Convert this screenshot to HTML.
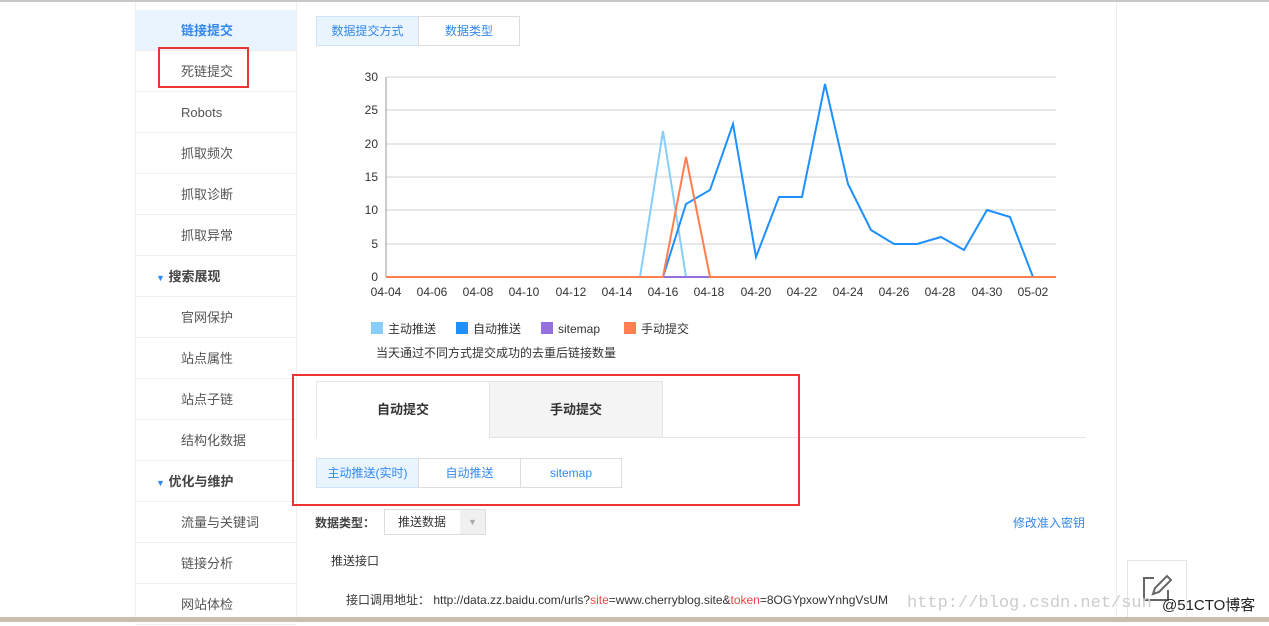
<!DOCTYPE html>
<html><head><meta charset="utf-8"><style>
*{margin:0;padding:0;box-sizing:border-box}
body{width:1269px;height:622px;overflow:hidden;background:#fff;position:relative;font-family:"Liberation Sans","Noto Sans CJK SC",sans-serif;font-size:13px;color:#333}
.a{position:absolute}
.side div{position:absolute;left:136px;width:160px;height:41px;line-height:42px;border-bottom:1px solid #eee;padding-left:45px;color:#555;font-size:13px}
.btn{position:absolute;height:30px;line-height:28px;border:1px solid #ddd;text-align:center;font-size:12px;color:#3388ee;background:#fff}
</style></head><body>
<div class="a" style="left:0;top:0;width:1269px;height:2px;background:#c8c8c8"></div>
<div class="a" style="left:135px;top:2px;width:1px;height:620px;background:#eee"></div>
<div class="a" style="left:296px;top:2px;width:1px;height:620px;background:#eee"></div>
<div class="a" style="left:1116px;top:2px;width:1px;height:620px;background:#eee"></div>
<div class="side">
<div style="top:10px;background:#eaf4fe;color:#3388ee;font-weight:bold">链接提交</div>
<div style="top:51px">死链提交</div>
<div style="top:92px">Robots</div>
<div style="top:133px">抓取频次</div>
<div style="top:174px">抓取诊断</div>
<div style="top:215px">抓取异常</div>
<div style="top:256px;padding-left:20px;font-weight:bold;color:#444"><span style="color:#3388ee;font-size:9px">▼</span> 搜索展现</div>
<div style="top:297px">官网保护</div>
<div style="top:338px">站点属性</div>
<div style="top:379px">站点子链</div>
<div style="top:420px">结构化数据</div>
<div style="top:461px;padding-left:20px;font-weight:bold;color:#444"><span style="color:#3388ee;font-size:9px">▼</span> 优化与维护</div>
<div style="top:502px">流量与关键词</div>
<div style="top:543px">链接分析</div>
<div style="top:584px">网站体检</div>
</div>
<div class="a" style="left:158px;top:47px;width:91px;height:41px;border:2px solid #e33"></div>
<div class="btn" style="left:316px;top:16px;width:103px;background:#eaf4fe;border-color:#cfe4f8">数据提交方式</div>
<div class="btn" style="left:418px;top:16px;width:102px">数据类型</div>
<svg class="a" style="left:0;top:0" width="1269" height="622">
<g stroke="#e8e8e8" stroke-width="2">
<line x1="386" y1="77" x2="1056" y2="77"/><line x1="386" y1="110" x2="1056" y2="110"/><line x1="386" y1="144" x2="1056" y2="144"/><line x1="386" y1="177" x2="1056" y2="177"/><line x1="386" y1="210" x2="1056" y2="210"/><line x1="386" y1="244" x2="1056" y2="244"/>
</g>
<line x1="386" y1="77" x2="386" y2="277" stroke="#999"/>
<g font-size="12" fill="#333" text-anchor="end" font-family="Liberation Sans">
<text x="378" y="81">30</text><text x="378" y="114">25</text><text x="378" y="148">20</text><text x="378" y="181">15</text><text x="378" y="214">10</text><text x="378" y="248">5</text><text x="378" y="281">0</text>
</g>
<g font-size="12" fill="#333" text-anchor="middle" font-family="Liberation Sans">
<text x="386" y="296">04-04</text><text x="432" y="296">04-06</text><text x="478" y="296">04-08</text><text x="524" y="296">04-10</text><text x="571" y="296">04-12</text><text x="617" y="296">04-14</text><text x="663" y="296">04-16</text><text x="709" y="296">04-18</text><text x="756" y="296">04-20</text><text x="802" y="296">04-22</text><text x="848" y="296">04-24</text><text x="894" y="296">04-26</text><text x="940" y="296">04-28</text><text x="987" y="296">04-30</text><text x="1033" y="296">05-02</text>
</g>
<polyline fill="none" stroke="#87cefa" stroke-width="2" points="640,277 663,131 686,277"/>
<polyline fill="none" stroke="#9370db" stroke-width="2" points="663,277 710,277"/>
<polyline fill="none" stroke="#1e90ff" stroke-width="2" points="663,277 686,204 710,190 733,124 756,257 779,197 802,197 825,84 848,184 871,230 894,244 917,244 941,237 964,250 987,210 1010,217 1033,277"/>
<polyline fill="none" stroke="#ff7f50" stroke-width="2" points="386,277 663,277 686,157 710,277 1056,277"/>
<rect x="371" y="322" width="12" height="12" fill="#87cefa"/>
<rect x="456" y="322" width="12" height="12" fill="#1e90ff"/>
<rect x="541" y="322" width="12" height="12" fill="#9370db"/>
<rect x="624" y="322" width="12" height="12" fill="#ff7f50"/>
<g font-size="12" fill="#333"><text x="388" y="333">主动推送</text><text x="473" y="333">自动推送</text><text x="558" y="333">sitemap</text><text x="641" y="333">手动提交</text>
<text x="376" y="357">当天通过不同方式提交成功的去重后链接数量</text></g>
<g fill="none" stroke="#666" stroke-width="2"><path d="M1154 578 h-10 v22 h24 v-10"/><path d="M1153 594 l2 -6 l12 -12 l4 4 l-12 12 z"/></g>
</svg>
<div class="a" style="left:316px;top:437px;width:770px;height:1px;background:#e5e5e5"></div>
<div class="a" style="left:316px;top:381px;width:174px;height:57px;border:1px solid #e5e5e5;border-bottom:none;background:#fff;text-align:center;line-height:56px;font-weight:bold;font-size:13px">自动提交</div>
<div class="a" style="left:489px;top:381px;width:174px;height:57px;border:1px solid #e5e5e5;background:#f4f4f4;text-align:center;line-height:56px;font-weight:bold;font-size:13px">手动提交</div>
<div class="btn" style="left:316px;top:458px;width:103px;background:#eaf4fe;border-color:#cfe4f8">主动推送(实时)</div>
<div class="btn" style="left:418px;top:458px;width:103px">自动推送</div>
<div class="btn" style="left:520px;top:458px;width:102px">sitemap</div>
<div class="a" style="left:292px;top:374px;width:508px;height:132px;border:2px solid #e33"></div>
<div class="a" style="left:315px;top:514px;font-size:12px;font-weight:bold;color:#444">数据类型：</div>
<div class="a" style="left:384px;top:509px;width:102px;height:26px;border:1px solid #ddd;font-size:12px;line-height:24px;padding-left:13px">推送数据</div>
<div class="a" style="left:460px;top:510px;width:25px;height:24px;background:#f0f0f0;color:#aaa;font-size:9px;text-align:center;line-height:24px">▼</div>
<div class="a" style="left:1013px;top:514px;font-size:12px;color:#3388ee">修改准入密钥</div>
<div class="a" style="left:331px;top:552px;font-size:12px">推送接口</div>
<div class="a" style="left:346px;top:591px;font-size:12px;white-space:nowrap">接口调用地址： http://data.zz.baidu.com/urls?<span style="color:#e44">site</span>=www.cherryblog.site&amp;<span style="color:#e44">token</span>=8OGYpxowYnhgVsUM</div>
<div class="a" style="left:1127px;top:560px;width:60px;height:62px;border:1px solid #e5e5e5"></div>
<div class="a" style="left:907px;top:594px;font-family:'Liberation Mono',monospace;font-size:17px;color:#ccc;white-space:nowrap">http://blog.csdn.net/sun</div>
<div class="a" style="left:1162px;top:594px;font-size:15px;color:#222;white-space:nowrap">@51CTO博客</div>
<div class="a" style="left:0;top:617px;width:1269px;height:5px;background:#c9bfae"></div>
</body></html>
